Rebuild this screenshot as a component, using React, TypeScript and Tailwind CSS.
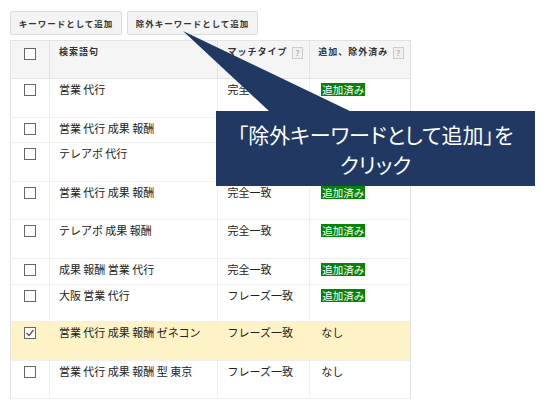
import React from 'react';

interface Row {
  keyword: string;
  match: string;
  status: 'added' | 'none' | '';
  h: string;
  checked?: boolean;
}

const rows: Row[] = [
  { keyword: '営業 代行', match: '完全一致', status: 'added', h: 'h-[39px]' },
  { keyword: '営業 代行 成果 報酬', match: '', status: '', h: 'h-[25px]' },
  { keyword: 'テレアポ 代行', match: '', status: '', h: 'h-[39px]' },
  { keyword: '営業 代行 成果 報酬', match: '完全一致', status: 'added', h: 'h-[38px]' },
  { keyword: 'テレアポ 成果 報酬', match: '完全一致', status: 'added', h: 'h-[39px]' },
  { keyword: '成果 報酬 営業 代行', match: '完全一致', status: 'added', h: 'h-[26px]' },
  { keyword: '大阪 営業 代行', match: 'フレーズ一致', status: 'added', h: 'h-[37px]' },
  { keyword: '営業 代行 成果 報酬 ゼネコン', match: 'フレーズ一致', status: 'none', h: 'h-[39px]', checked: true },
  { keyword: '営業 代行 成果 報酬 型 東京', match: 'フレーズ一致', status: 'none', h: 'h-[38px]' },
];

const font = "font-['Noto_Sans_CJK_JP',sans-serif]";

const Checkbox: React.FC<{ checked?: boolean }> = ({ checked }) => (
  <div className="w-[12px] h-[12px] border border-[#666] bg-white flex items-center justify-center">
    {checked && (
      <svg width="10" height="10" viewBox="0 0 10 10">
        <path d="M1.5 5 L4 7.5 L8.5 2" stroke="#555" strokeWidth="1.2" fill="none" />
      </svg>
    )}
  </div>
);

const Help: React.FC = () => (
  <span className="ml-[5px] mt-[2px] inline-flex w-[11px] h-[12px] items-center justify-center border border-[#ccc] bg-[#f0f0f0] text-[8px] text-[#999] font-normal leading-none">
    ?
  </span>
);

export default function App() {
  return (
    <div className={`relative w-[549px] h-[401px] bg-white overflow-hidden ${font} text-[#222]`}>
      {/* Action buttons */}
      <div className="flex gap-[5px] pl-[10px] pt-[11px] h-[40px]">
        <button className="h-[24px] w-[112px] rounded-[2px] border border-[#dcdcdc] bg-[#f4f4f4] text-[8.5px] font-bold tracking-[1px] text-[#333]">
          キーワードとして追加
        </button>
        <button className="h-[24px] w-[131px] rounded-[2px] border border-[#dcdcdc] bg-[#f4f4f4] text-[8.5px] font-bold tracking-[1px] text-[#333]">
          除外キーワードとして追加
        </button>
      </div>

      {/* Table */}
      <div className="ml-[10px] w-[401px] border-l border-r border-t border-[#e3e3e3] text-[11px] leading-[14px]">
        <div className="flex h-[38px] bg-[#f5f5f5] border-b border-[#e3e3e3] text-[9px] font-bold tracking-[1px] text-[#333]">
          <div className="w-[39px] flex justify-center pt-[7px] border-r border-[#e3e3e3]">
            <Checkbox />
          </div>
          <div className="w-[169px] pl-[9px] pt-[4px] border-r border-[#e3e3e3]">検索語句</div>
          <div className="w-[92px] pl-[9px] pt-[4px] border-r border-[#e3e3e3] flex items-start">
            マッチタイプ<Help />
          </div>
          <div className="w-[100px] pl-[8px] pt-[4px] flex items-start">
            追加、除外済み<Help />
          </div>
        </div>
        {rows.map((r, i) => (
          <div
            key={i}
            className={`flex ${r.h} border-b border-[#efefef] ${r.checked ? 'bg-[#fdf3c6]' : 'bg-white'}`}
          >
            <div className="w-[39px] flex justify-center pt-[5px] border-r border-[#efefef]">
              <Checkbox checked={r.checked} />
            </div>
            <div className="w-[169px] pl-[9px] pt-[3px] border-r border-[#efefef]">{r.keyword}</div>
            <div className="w-[92px] pl-[9px] pt-[3px] border-r border-[#efefef]">{r.match}</div>
            <div className="w-[100px] pl-[11px] pt-[3px]">
              {r.status === 'added' && (
                <span className="inline-block bg-[#078407] text-white text-[10.5px] leading-[13px] px-[1px]">
                  追加済み
                </span>
              )}
              {r.status === 'none' && <span>なし</span>}
            </div>
          </div>
        ))}
      </div>

      {/* Callout */}
      <svg className="absolute left-0 top-0" width="549" height="401">
        <polygon points="183,31 270,112 352,112" fill="#213862" />
      </svg>
      <div className="absolute left-[216px] top-[111px] w-[319px] h-[75px] bg-[#213862] text-white text-[21px] leading-[30px] text-center flex flex-col justify-center [font-feature-settings:'palt']">
        <div>「除外キーワードとして追加」を</div>
        <div>クリック</div>
      </div>
    </div>
  );
}
